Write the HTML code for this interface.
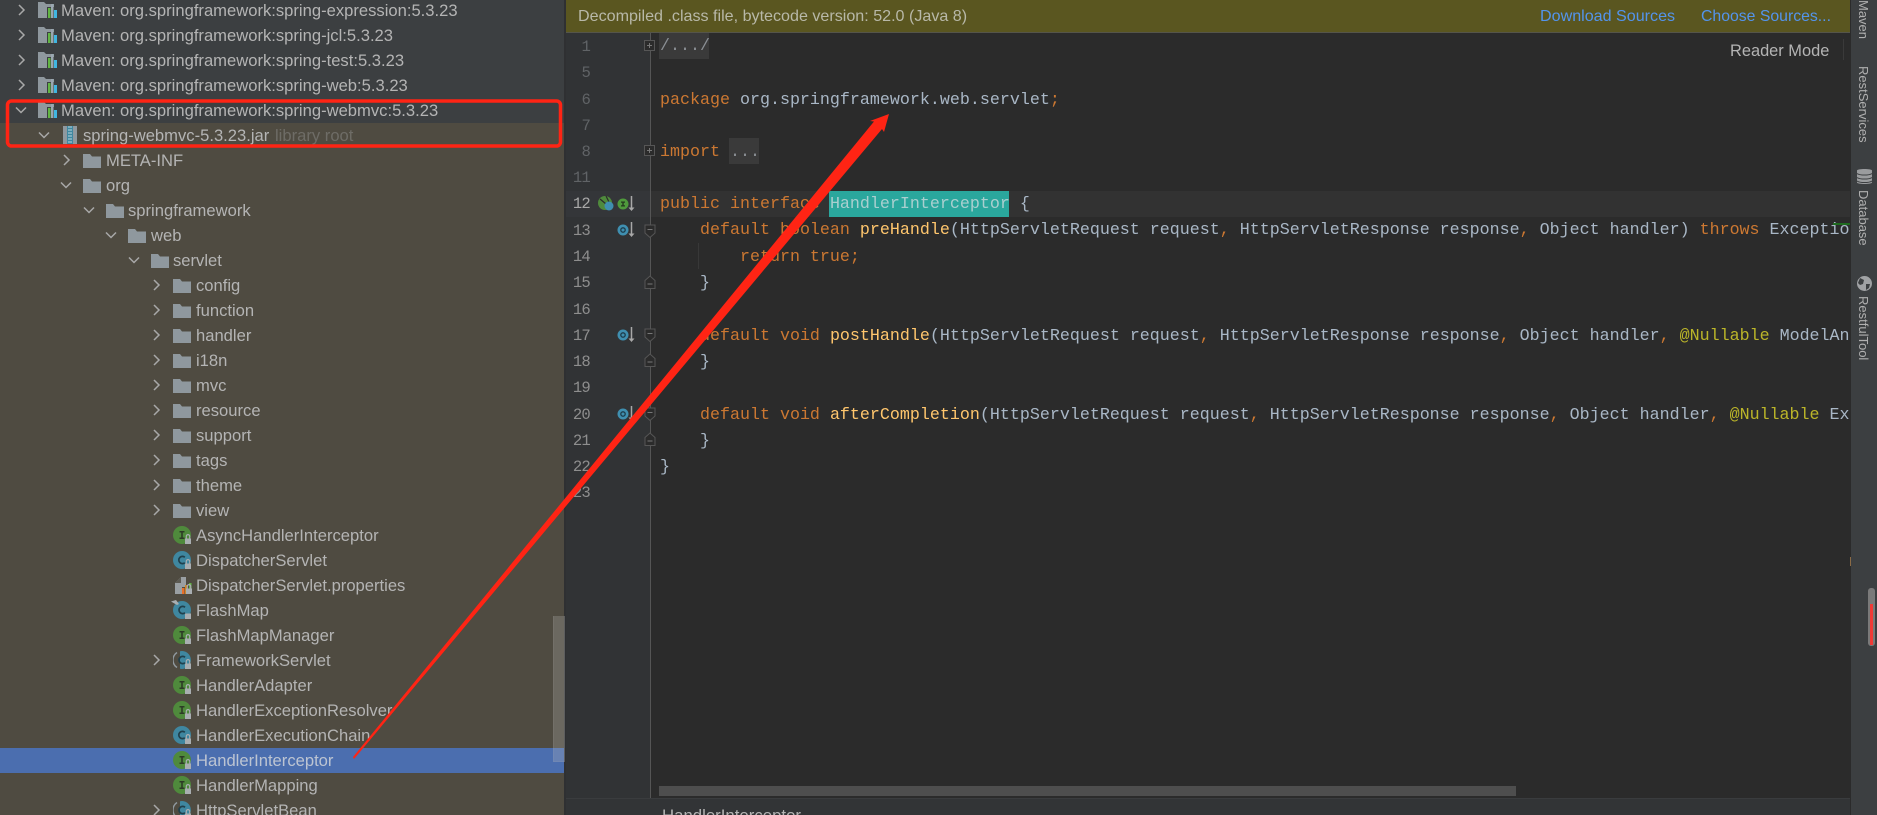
<!DOCTYPE html>
<html><head><meta charset="utf-8">
<style>
html,body{margin:0;padding:0;background:#2b2b2b}
#p{position:relative;width:1877px;height:815px;overflow:hidden;background:#2b2b2b}
.a{position:absolute}
#tree{position:absolute;left:0;top:-1px;width:564px;height:816px;overflow:hidden}
#tree .t{position:absolute;font:16.6px/25px "Liberation Sans",sans-serif;color:#b4b4b4;white-space:pre;height:25px}
#tree svg{position:absolute}
#code{position:absolute;left:566px;top:1px;width:1284px;height:797px;overflow:hidden}
.l{position:absolute;left:94px;margin-top:1px;font:16.67px/26px "Liberation Mono",monospace;color:#a9b7c6;white-space:pre;height:26px}
.n{position:absolute;left:1px;width:23px;text-align:right;font:15.6px/26px "Liberation Mono",monospace;letter-spacing:-.8px;color:#8e8e8e;height:26px}
.d{color:#606366}
.k{color:#cc7832}
.m{color:#ffc66d}
.u{color:#bbb529}
.v{position:absolute;font:13px/20px "Liberation Sans",sans-serif;color:#b0b0b0;white-space:pre;transform-origin:0 0;transform:rotate(90deg)}
.b{position:absolute;font:16px/32px "Liberation Sans",sans-serif;white-space:pre}
</style></head><body>
<div id="p">
<svg width="0" height="0" style="position:absolute">
<defs>
<symbol id="fo" viewBox="0 0 18 15"><path d="M0 1h7l2 2.500h9V15H0z" fill="#8f989e"/></symbol>
<symbol id="mv" viewBox="0 0 19 18"><path d="M0 1h6l2 2h8v3H9v11H0z" fill="#8f989e"/><rect x="10" y="7" width="2.500" height="10" fill="#62b543"/><rect x="13" y="3" width="2.500" height="14" fill="#9aa7b0"/><rect x="16" y="9" width="3" height="8" fill="#40b6e0"/></symbol>
<symbol id="ch" viewBox="0 0 12 12"><path d="M4 1l5 5-5 5" fill="none" stroke="#a8a8a8" stroke-width="1.500"/></symbol>
<symbol id="cd" viewBox="0 0 12 12"><path d="M1 3.500l5 5 5-5" fill="none" stroke="#a8a8a8" stroke-width="1.500"/></symbol>
<symbol id="lk" viewBox="0 0 18 18"><rect x="12" y="12.500" width="6" height="5.500" fill="#a9aeb1"/><path d="M13.300 12.500v-2.200a1.700 1.700 0 0 1 3.400 0v2.200" fill="none" stroke="#a9aeb1" stroke-width="1.200"/></symbol>
<symbol id="ii" viewBox="0 0 18 18"><circle cx="9" cy="9" r="9" fill="#4f8a3c"/><path d="M6.500 5h5v1.500h-1.700v5H11.500V13h-5v-1.500h1.700v-5H6.500z" fill="#2d3a26"/><use href="#lk" width="18" height="18"/></symbol>
<symbol id="cc" viewBox="0 0 18 18"><circle cx="9" cy="9" r="9" fill="#3f87a0"/><path d="M11.800 6.300A3.600 3.600 0 1 0 11.800 11.700" fill="none" stroke="#20404c" stroke-width="1.700"/><use href="#lk" width="18" height="18"/></symbol>
<symbol id="ab" viewBox="0 0 18 18"><path d="M4 1.500A9 9 0 0 0 4 16.500" fill="none" stroke="#8f989e" stroke-width="1.500"/><path d="M8 0.200A9 9 0 1 1 8 17.800z" fill="#3f87a0" transform="translate(-1 0)"/><path d="M12 6.300A3.600 3.600 0 1 0 12 11.700" fill="none" stroke="#20404c" stroke-width="1.700"/><use href="#lk" width="18" height="18"/></symbol>
<symbol id="pr" viewBox="0 0 18 18"><path d="M1 7l6-6h5v10H8v7H1z" fill="#9a9fa2"/><path d="M1 7h6V1z" fill="#5c5a52"/><rect x="8" y="12" width="2.500" height="6" fill="#e8702a"/><rect x="11" y="9" width="2.500" height="9" fill="#c8872f"/><rect x="15" y="7" width="2.500" height="6" fill="#62b543"/><use href="#lk" width="18" height="18"/></symbol>
<symbol id="fm" viewBox="0 0 20 20"><circle cx="11" cy="11" r="9" fill="#3f87a0"/><path d="M14 8.300A3.600 3.600 0 1 0 14 13.700" fill="none" stroke="#20404c" stroke-width="1.700"/><path d="M0 2.500L5 1l3 4-2 1z" fill="#a9aeb1"/><rect x="14" y="14.500" width="6" height="5.500" fill="#a9aeb1"/></symbol>
<symbol id="ov" viewBox="0 0 24 16"><circle cx="6" cy="8" r="5.500" fill="#3f8fb0"/><circle cx="6" cy="8" r="2.200" fill="none" stroke="#1d3c4a" stroke-width="1.300"/><path d="M14.500 0v12" stroke="#a8a8a8" stroke-width="1.500"/><path d="M11.500 11.500h6l-3 3.500z" fill="#a8a8a8"/></symbol>
<symbol id="iv" viewBox="0 0 24 16"><circle cx="6" cy="8" r="5.500" fill="#4f9a3c"/><path d="M4 5.500h4v1.200H6.700v2.600H8v1.200H4V9.300h1.300V6.700H4z" fill="#243a1e"/><path d="M14.500 0v12" stroke="#a8a8a8" stroke-width="1.500"/><path d="M11.500 11.500h6l-3 3.500z" fill="#a8a8a8"/></symbol>
<symbol id="fp" viewBox="0 0 13 13"><rect x=".5" y=".5" width="10" height="10" fill="#2b2b2b" stroke="#565656"/><path d="M3 5.500h5M5.500 3v5" stroke="#777"/></symbol>
<symbol id="fd" viewBox="0 0 13 15"><path d="M1 1h10v8l-5 4.500L1 9z" fill="#2b2b2b" stroke="#565656"/><path d="M3.500 5.500h5" stroke="#777"/></symbol>
<symbol id="fu" viewBox="0 0 13 15"><path d="M1 13.500h10v-8L6 1 1 5.500z" fill="#2b2b2b" stroke="#565656"/><path d="M3.500 9h5" stroke="#777"/></symbol>
</defs></svg>

<!-- sidebar -->
<div class="a" style="left:0;top:0;width:564px;height:123px;background:#3c3f41"></div>
<div class="a" style="left:0;top:123px;width:564px;height:692px;background:#4f4b41"></div>
<div class="a" style="left:0;top:748px;width:564px;height:25px;background:#4b6eaf"></div>
<div class="a" style="left:564px;top:0;width:2px;height:815px;background:#2f3032"></div>

<div id="tree">
<svg style="left:15px;top:5px" width="12" height="12"><use href="#ch" width="12" height="12"/></svg><svg style="left:38px;top:2px" width="19" height="18"><use href="#mv" width="19" height="18"/></svg><div class="t" style="left:61px;top:-1px">Maven: org.springframework:spring-expression:5.3.23</div>
<svg style="left:15px;top:30px" width="12" height="12"><use href="#ch" width="12" height="12"/></svg><svg style="left:38px;top:27px" width="19" height="18"><use href="#mv" width="19" height="18"/></svg><div class="t" style="left:61px;top:24px">Maven: org.springframework:spring-jcl:5.3.23</div>
<svg style="left:15px;top:55px" width="12" height="12"><use href="#ch" width="12" height="12"/></svg><svg style="left:38px;top:52px" width="19" height="18"><use href="#mv" width="19" height="18"/></svg><div class="t" style="left:61px;top:49px">Maven: org.springframework:spring-test:5.3.23</div>
<svg style="left:15px;top:80px" width="12" height="12"><use href="#ch" width="12" height="12"/></svg><svg style="left:38px;top:77px" width="19" height="18"><use href="#mv" width="19" height="18"/></svg><div class="t" style="left:61px;top:74px">Maven: org.springframework:spring-web:5.3.23</div>
<svg style="left:15px;top:105px" width="12" height="12"><use href="#cd" width="12" height="12"/></svg><svg style="left:38px;top:102px" width="19" height="18"><use href="#mv" width="19" height="18"/></svg><div class="t" style="left:61px;top:99px">Maven: org.springframework:spring-webmvc:5.3.23</div>
<svg style="left:38px;top:130px" width="12" height="12"><use href="#cd" width="12" height="12"/></svg>
<svg style="left:63px;top:127px" width="14" height="18"><rect width="14" height="18" fill="#8f989e"/><rect x="4" width="6" height="18" fill="#3f87a0"/><path d="M5 1h4M5 4h4M5 7h4M5 10h4M5 13h4M5 16h4" stroke="#b9d4dd" stroke-width="1"/></svg>
<div class="t" style="left:83px;top:124px">spring-webmvc-5.3.23.jar</div><div class="t" style="left:275px;top:124px;color:#6e6c66">library root</div>

<svg style="left:60px;top:155px" width="12" height="12"><use href="#ch" width="12" height="12"/></svg><svg style="left:83px;top:154px" width="18" height="15"><use href="#fo" width="18" height="15"/></svg><div class="t" style="left:106px;top:149px">META-INF</div>
<svg style="left:60px;top:180px" width="12" height="12"><use href="#cd" width="12" height="12"/></svg><svg style="left:83px;top:179px" width="18" height="15"><use href="#fo" width="18" height="15"/></svg><div class="t" style="left:106px;top:174px">org</div>
<svg style="left:83px;top:205px" width="12" height="12"><use href="#cd" width="12" height="12"/></svg><svg style="left:106px;top:204px" width="18" height="15"><use href="#fo" width="18" height="15"/></svg><div class="t" style="left:128px;top:199px">springframework</div>
<svg style="left:105px;top:230px" width="12" height="12"><use href="#cd" width="12" height="12"/></svg><svg style="left:128px;top:229px" width="18" height="15"><use href="#fo" width="18" height="15"/></svg><div class="t" style="left:151px;top:224px">web</div>
<svg style="left:128px;top:255px" width="12" height="12"><use href="#cd" width="12" height="12"/></svg><svg style="left:151px;top:254px" width="18" height="15"><use href="#fo" width="18" height="15"/></svg><div class="t" style="left:173px;top:249px">servlet</div>

<svg style="left:150px;top:280px" width="12" height="12"><use href="#ch" width="12" height="12"/></svg><svg style="left:173px;top:279px" width="18" height="15"><use href="#fo" width="18" height="15"/></svg><div class="t" style="left:196px;top:274px">config</div>
<svg style="left:150px;top:305px" width="12" height="12"><use href="#ch" width="12" height="12"/></svg><svg style="left:173px;top:304px" width="18" height="15"><use href="#fo" width="18" height="15"/></svg><div class="t" style="left:196px;top:299px">function</div>
<svg style="left:150px;top:330px" width="12" height="12"><use href="#ch" width="12" height="12"/></svg><svg style="left:173px;top:329px" width="18" height="15"><use href="#fo" width="18" height="15"/></svg><div class="t" style="left:196px;top:324px">handler</div>
<svg style="left:150px;top:355px" width="12" height="12"><use href="#ch" width="12" height="12"/></svg><svg style="left:173px;top:354px" width="18" height="15"><use href="#fo" width="18" height="15"/></svg><div class="t" style="left:196px;top:349px">i18n</div>
<svg style="left:150px;top:380px" width="12" height="12"><use href="#ch" width="12" height="12"/></svg><svg style="left:173px;top:379px" width="18" height="15"><use href="#fo" width="18" height="15"/></svg><div class="t" style="left:196px;top:374px">mvc</div>
<svg style="left:150px;top:405px" width="12" height="12"><use href="#ch" width="12" height="12"/></svg><svg style="left:173px;top:404px" width="18" height="15"><use href="#fo" width="18" height="15"/></svg><div class="t" style="left:196px;top:399px">resource</div>
<svg style="left:150px;top:430px" width="12" height="12"><use href="#ch" width="12" height="12"/></svg><svg style="left:173px;top:429px" width="18" height="15"><use href="#fo" width="18" height="15"/></svg><div class="t" style="left:196px;top:424px">support</div>
<svg style="left:150px;top:455px" width="12" height="12"><use href="#ch" width="12" height="12"/></svg><svg style="left:173px;top:454px" width="18" height="15"><use href="#fo" width="18" height="15"/></svg><div class="t" style="left:196px;top:449px">tags</div>
<svg style="left:150px;top:480px" width="12" height="12"><use href="#ch" width="12" height="12"/></svg><svg style="left:173px;top:479px" width="18" height="15"><use href="#fo" width="18" height="15"/></svg><div class="t" style="left:196px;top:474px">theme</div>
<svg style="left:150px;top:505px" width="12" height="12"><use href="#ch" width="12" height="12"/></svg><svg style="left:173px;top:504px" width="18" height="15"><use href="#fo" width="18" height="15"/></svg><div class="t" style="left:196px;top:499px">view</div>

<svg style="left:173px;top:527px" width="18" height="18"><use href="#ii" width="18" height="18"/></svg><div class="t" style="left:196px;top:524px">AsyncHandlerInterceptor</div>
<svg style="left:173px;top:552px" width="18" height="18"><use href="#cc" width="18" height="18"/></svg><div class="t" style="left:196px;top:549px">DispatcherServlet</div>
<svg style="left:174px;top:577px" width="18" height="18"><use href="#pr" width="18" height="18"/></svg><div class="t" style="left:196px;top:574px">DispatcherServlet.properties</div>
<svg style="left:171px;top:600px" width="20" height="20"><use href="#fm" width="20" height="20"/></svg><div class="t" style="left:196px;top:599px">FlashMap</div>
<svg style="left:173px;top:627px" width="18" height="18"><use href="#ii" width="18" height="18"/></svg><div class="t" style="left:196px;top:624px">FlashMapManager</div>
<svg style="left:150px;top:655px" width="12" height="12"><use href="#ch" width="12" height="12"/></svg><svg style="left:173px;top:652px" width="18" height="18"><use href="#ab" width="18" height="18"/></svg><div class="t" style="left:196px;top:649px">FrameworkServlet</div>
<svg style="left:173px;top:677px" width="18" height="18"><use href="#ii" width="18" height="18"/></svg><div class="t" style="left:196px;top:674px">HandlerAdapter</div>
<svg style="left:173px;top:702px" width="18" height="18"><use href="#ii" width="18" height="18"/></svg><div class="t" style="left:196px;top:699px">HandlerExceptionResolver</div>
<svg style="left:173px;top:727px" width="18" height="18"><use href="#cc" width="18" height="18"/></svg><div class="t" style="left:196px;top:724px">HandlerExecutionChain</div>
<svg style="left:173px;top:752px" width="18" height="18"><use href="#ii" width="18" height="18"/></svg><div class="t" style="left:196px;top:749px;color:#bcc4d2">HandlerInterceptor</div>
<svg style="left:173px;top:777px" width="18" height="18"><use href="#ii" width="18" height="18"/></svg><div class="t" style="left:196px;top:774px">HandlerMapping</div>
<svg style="left:150px;top:805px" width="12" height="12"><use href="#ch" width="12" height="12"/></svg><svg style="left:173px;top:802px" width="18" height="18"><use href="#ab" width="18" height="18"/></svg><div class="t" style="left:196px;top:799px">HttpServletBean</div>
</div>
<div class="a" style="left:553px;top:616px;width:10px;height:145px;background:rgba(190,190,190,.25);border:1px solid rgba(190,190,190,.1);border-top:0"></div>

<!-- editor -->
<div class="a" style="left:566px;top:0;width:1284px;height:32px;background:#5a5620;border-bottom:1px solid #55554a"></div>
<div class="b" style="left:578px;top:0;color:#b8b8a8;font-size:16.1px">Decompiled .class file, bytecode version: 52.0 (Java 8)</div>
<div class="b" style="left:1540px;top:0;color:#5394ec;font-size:16.1px">Download Sources</div>
<div class="b" style="left:1701px;top:1px;color:#5394ec;font-size:15.8px">Choose Sources...</div>

<div class="a" style="left:566px;top:33px;width:84px;height:765px;background:#313335"></div>
<div class="a" style="left:650px;top:33px;width:1px;height:765px;background:#555"></div>
<div class="a" style="left:566px;top:191px;width:84px;height:26px;background:#343639"></div>
<div class="a" style="left:651px;top:191px;width:1199px;height:26px;background:#323232"></div>
<div class="a" style="left:829px;top:191px;width:180px;height:26px;background:#2aa79d"></div>
<div class="a" style="left:659px;top:33px;width:50px;height:26px;background:#3a3a3a"></div>
<div class="a" style="left:729px;top:138px;width:30px;height:26px;background:#3a3a3a"></div>
<div class="a" style="left:698px;top:243px;width:1px;height:26px;background:#383838"></div>

<div id="code">
<div class="n d" style="top:33px">1</div>
<div class="n d" style="top:59px">5</div>
<div class="n d" style="top:86px">6</div>
<div class="n d" style="top:112px">7</div>
<div class="n d" style="top:138px">8</div>
<div class="n d" style="top:164px">11</div>
<div class="n" style="top:190px;color:#a8a8a8">12</div>
<div class="n" style="top:217px">13</div>
<div class="n" style="top:243px">14</div>
<div class="n" style="top:269px">15</div>
<div class="n" style="top:296px">16</div>
<div class="n" style="top:322px">17</div>
<div class="n" style="top:348px">18</div>
<div class="n" style="top:374px">19</div>
<div class="n" style="top:401px">20</div>
<div class="n" style="top:427px">21</div>
<div class="n" style="top:453px">22</div>
<div class="n" style="top:479px">23</div>

<div class="l" style="top:32px;color:#8a8f94">/.../</div>
<div class="l" style="top:86px"><span class="k">package</span> org.springframework.web.servlet<span class="k">;</span></div>
<div class="l" style="top:138px"><span class="k">import</span> <span style="color:#8a8f94">...</span></div>
<div class="l" style="top:190px"><span class="k">public interface</span> <span style="color:#a9cfcf">HandlerInterceptor</span> {</div>
<div class="l" style="top:216px">    <span class="k">default boolean</span> <span class="m">preHandle</span>(HttpServletRequest request<span class="k">,</span> HttpServletResponse response<span class="k">,</span> Object handler) <span class="k">throws</span> Exception {</div>
<div class="l" style="top:243px">        <span class="k">return true;</span></div>
<div class="l" style="top:269px">    }</div>
<div class="l" style="top:322px">    <span class="k">default void</span> <span class="m">postHandle</span>(HttpServletRequest request<span class="k">,</span> HttpServletResponse response<span class="k">,</span> Object handler<span class="k">,</span> <span class="u">@Nullable</span> ModelAndView modelAndView) <span class="k">throws</span> Exception {</div>
<div class="l" style="top:348px">    }</div>
<div class="l" style="top:401px">    <span class="k">default void</span> <span class="m">afterCompletion</span>(HttpServletRequest request<span class="k">,</span> HttpServletResponse response<span class="k">,</span> Object handler<span class="k">,</span> <span class="u">@Nullable</span> Exception ex) <span class="k">throws</span> Exception {</div>
<div class="l" style="top:427px">    }</div>
<div class="l" style="top:453px">}</div>

<svg class="a" style="left:32px;top:195px" width="16" height="15"><path d="M7 0a7 7 0 1 0 0 14 7 7 0 0 0 0-14z" fill="#4f8a3c"/><path d="M2 3l6 5M8 0l3 6" stroke="#2b2b2b" stroke-width="1.200"/><circle cx="11" cy="10" r="4.500" fill="#3f8fb0"/></svg>
<svg class="a" style="left:51px;top:195px" width="24" height="16"><use href="#iv" width="24" height="16"/></svg>
<svg class="a" style="left:51px;top:221px" width="24" height="16"><use href="#ov" width="24" height="16"/></svg>
<svg class="a" style="left:51px;top:326px" width="24" height="16"><use href="#ov" width="24" height="16"/></svg>
<svg class="a" style="left:51px;top:405px" width="24" height="16"><use href="#ov" width="24" height="16"/></svg>
<svg class="a" style="left:78px;top:39px" width="13" height="13"><use href="#fp" width="13" height="13"/></svg>
<svg class="a" style="left:78px;top:144px" width="13" height="13"><use href="#fp" width="13" height="13"/></svg>
<svg class="a" style="left:78px;top:223px" width="13" height="15"><use href="#fd" width="13" height="15"/></svg>
<svg class="a" style="left:78px;top:274px" width="13" height="15"><use href="#fu" width="13" height="15"/></svg>
<svg class="a" style="left:78px;top:327px" width="13" height="15"><use href="#fd" width="13" height="15"/></svg>
<svg class="a" style="left:78px;top:352px" width="13" height="15"><use href="#fu" width="13" height="15"/></svg>
<svg class="a" style="left:78px;top:406px" width="13" height="15"><use href="#fd" width="13" height="15"/></svg>
<svg class="a" style="left:78px;top:431px" width="13" height="15"><use href="#fu" width="13" height="15"/></svg>
</div>

<div class="b" style="left:1730px;top:35px;color:#b4b4b4;font-size:16.4px">Reader Mode</div>
<div class="a" style="left:1843px;top:39px;width:1px;height:21px;background:#3a3a3a"></div>
<div class="a" style="left:1833px;top:223px;width:17px;height:2px;background:#1f6b1f"></div>
<div class="a" style="left:1850px;top:557px;width:1px;height:9px;background:#8a6a45"></div>
<div class="a" style="left:659px;top:786px;width:857px;height:10px;background:#4e4e4e"></div>

<!-- breadcrumb -->
<div class="a" style="left:566px;top:798px;width:1284px;height:17px;background:#323436;border-top:1px solid #3a3c3e;box-sizing:border-box;overflow:hidden"><div style="position:absolute;left:96px;top:7px;font:16.8px/20px 'Liberation Sans',sans-serif;color:#b4b4b4">HandlerInterceptor</div></div>

<!-- right strip -->
<div class="a" style="left:1851px;top:0;width:26px;height:815px;background:#3c3f41"></div>
<div class="v" style="left:1873px;top:0">Maven</div>
<div class="v" style="left:1873px;top:66px">RestServices</div>
<svg class="a" style="left:1857px;top:168px" width="15" height="17"><path d="M0 2.500C0 .5 15 .5 15 2.500v12c0 2-15 2-15 0z" fill="#9a9c9e"/><path d="M0 5.500c3 2 12 2 15 0M0 9.500c3 2 12 2 15 0M0 13c3 2 12 2 15 0" stroke="#3c3f41" fill="none"/></svg>
<div class="v" style="left:1873px;top:190px">Database</div>
<svg class="a" style="left:1857px;top:276px" width="15" height="15"><circle cx="7.500" cy="7.500" r="7.500" fill="#a0a2a4"/><path d="M3 2l4 2-1 4-3 1-2-2zM9 8l4 0-1 4-3 2z" fill="#3c3f41"/></svg>
<div class="v" style="left:1873px;top:296px">RestfulTool</div>
<div class="a" style="left:1868px;top:588px;width:7px;height:58px;background:#7a7a7a;border-radius:3px"></div>
<div class="a" style="left:1870px;top:604px;width:3px;height:41px;background:#f03a36"></div>

<!-- annotations -->
<svg class="a" style="left:0;top:0;pointer-events:none" width="1877" height="815">
<rect x="7.500" y="101" width="553" height="45" rx="4" fill="none" stroke="#ff2414" stroke-width="3.500"/>
<polygon points="353,757 874,121.500 870,121 889,114 884,132 882,129 354,759" fill="#ff2414"/>
</svg>
</div>
</body></html>
